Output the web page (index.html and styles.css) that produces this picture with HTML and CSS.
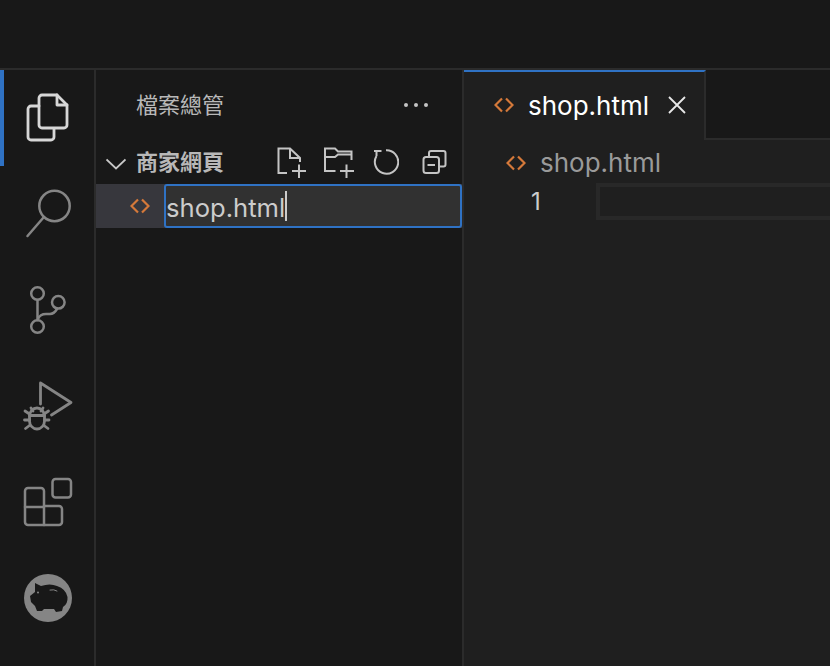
FILE: index.html
```html
<!DOCTYPE html>
<html lang="zh-Hant">
<head>
<meta charset="utf-8">
<title>shop.html</title>
<link rel="stylesheet" href="styles.css">
</head>
<body>
<div class="titlebar"></div>
<div class="workbench">
  <nav class="activity">
    <div class="act-item active">
      <svg class="act-icon on" viewBox="19 90 56 56"><path d="M39 106H31a3 3 0 0 0-3 3V137a3 3 0 0 0 3 3H51a3 3 0 0 0 3-3V129"/><path d="M42 95H57L67 105V125a3 3 0 0 1-3 3H42a3 3 0 0 1-3-3V98a3 3 0 0 1 3-3Z"/><path d="M57 95V105H67"/></svg>
    </div>
    <div class="act-item">
      <svg class="act-icon" viewBox="19 186 56 56"><circle cx="54.5" cy="206" r="15.2"/><path d="M43.5 217.5L27.5 236"/></svg>
    </div>
    <div class="act-item">
      <svg class="act-icon" viewBox="19 282 56 56"><circle cx="37.5" cy="293.5" r="6.3"/><circle cx="58.3" cy="302.3" r="6.3"/><circle cx="37.5" cy="326.5" r="6.3"/><path d="M37.5 300V320"/><path d="M38 319Q40 314 46 314H50Q54 314 57 309"/></svg>
    </div>
    <div class="act-item">
      <svg class="act-icon bug" viewBox="19 378 56 56"><path d="M40.500 404V383L71 402.500L51.500 415"/><path d="M29.500 421V416a7.500 8 0 0 1 15 0V421a7.500 8 0 0 1-15 0Z"/><path d="M29.500 415.500H44.500M31 408l2 3M43 408l-2 3M25 411l4.500 3M48.500 411l-4.500 3M24.500 420H29.500M44.500 420H49M25.500 428.500l4-3M48 428.500l-4-3"/></svg>
    </div>
    <div class="act-item">
      <svg class="act-icon" viewBox="19 474 56 56"><rect x="52.500" y="479" width="18.500" height="18.500" rx="3"/><path d="M28 488H41a3 3 0 0 1 3 3V506H59a3 3 0 0 1 3 3V522a3 3 0 0 1-3 3H28a3 3 0 0 1-3-3V491a3 3 0 0 1 3-3Z"/><path d="M25 507H44M44 506V525"/></svg>
    </div>
    <div class="act-item">
      <svg class="act-icon pig" viewBox="19 570 56 56"><circle class="pig-face" cx="48" cy="598" r="24"/><path class="pig-body" d="M35 583L41 586Q50 583 57 586Q66 589 67.500 597Q68 604 63 607L62 611L56 612L54 609L44 609L42 611L37 611L35 606L31 602L30 596L35 592Z"/><circle class="pig-face" cx="38" cy="592.500" r="1"/><path class="pig-line" d="M50 590Q54 589 57 591"/></svg>
    </div>
  </nav>

  <aside class="sidebar">
    <header class="side-head">
      <span class="side-title">檔案總管</span>
      <svg class="dots" viewBox="0 0 28 6"><circle cx="4" cy="3" r="2"/><circle cx="14" cy="3" r="2"/><circle cx="24" cy="3" r="2"/></svg>
    </header>
    <div class="section">
      <svg class="chevron" viewBox="0 0 20 12"><path d="M0.500 1.500L10 10.500L19.500 1.500"/></svg>
      <span class="section-title">商家網頁</span>
      <div class="tools">
        <svg class="tool tool-file" viewBox="277 147 30 32"><path d="M287 173H278.500V148.500H290L300 158V162M290 148.500V158H300M299 164.500V178M292 171H306"/></svg>
        <svg class="tool tool-folder" viewBox="323 147 32 32"><path d="M335.500 171H325V148.500H335L338 151.500H351.500V160M325 157H335L338 154.500H351.500M346.500 164.500V178M340 171H354"/></svg>
        <svg class="tool tool-refresh" viewBox="373 149 26 26"><path d="M376.500 156A11.700 11.700 0 1 0 386 150.300M374 151H381.500M376.500 151V156"/></svg>
        <svg class="tool tool-collapse" viewBox="421 149 26 26"><path d="M429 156V153a2 2 0 0 1 2-2H443.500a2 2 0 0 1 2 2V164.500a2 2 0 0 1-2 2H439.500"/><rect x="423.500" y="157" width="15.500" height="16" rx="2.500"/><path d="M427.500 165H435"/></svg>
      </div>
    </div>
    <div class="file-row">
      <svg class="html-icon" viewBox="0 0 20 16"><path d="M8 1.500L1.500 8L8 14.500M12 1.500L18.500 8L12 14.500"/></svg>
      <div class="rename"><span class="rename-text">shop.html</span><span class="caret"></span></div>
    </div>
  </aside>

  <main class="editor">
    <div class="tabs">
      <div class="tab">
        <svg class="html-icon" viewBox="0 0 20 16"><path d="M8 1.500L1.500 8L8 14.500M12 1.500L18.500 8L12 14.500"/></svg>
        <span class="tab-name">shop.html</span>
        <svg class="close" viewBox="0 0 18 18"><path d="M1 1L17 17M17 1L1 17"/></svg>
      </div>
      <div class="tabs-rest"></div>
    </div>
    <div class="crumbs">
      <svg class="html-icon" viewBox="0 0 20 16"><path d="M8 1.500L1.500 8L8 14.500M12 1.500L18.500 8L12 14.500"/></svg>
      <span class="crumb-name">shop.html</span>
    </div>
    <div class="code-line">
      <span class="line-no">1</span>
      <div class="line-current"></div>
    </div>
  </main>
</div>
</body>
</html>
```
FILE: styles.css
```css
* { box-sizing: border-box; }
html, body { height: 100%; }
body {
  margin: 0;
  overflow: hidden;
  display: flex;
  flex-direction: column;
  background: #181818;
  font-family: Inter, "Noto Sans CJK TC", sans-serif;
}
svg { display: block; flex: none; fill: none; }

.titlebar {
  height: 70px;
  flex: none;
  background: #181818;
  border-bottom: 2px solid #2b2b2b;
}
.workbench { flex: 1; display: flex; min-height: 0; }

.activity {
  width: 96px;
  flex: none;
  border-right: 2px solid #2b2b2b;
  background: #181818;
}
.act-item {
  height: 96px;
  display: flex;
  align-items: center;
  justify-content: center;
}
.act-item.active { box-shadow: inset 4px 0 0 #2f72c4; }
.act-icon {
  width: 56px;
  height: 56px;
  stroke: #858585;
  stroke-width: 2.5;
  stroke-linejoin: round;
  stroke-linecap: round;
}
.act-icon.on { stroke: #d7d7d7; stroke-width: 2.800; }
.act-icon.bug { stroke-width: 2.800; }
.pig { stroke: none; }
.pig-face { fill: #858585; }
.pig-body { fill: #181818; }
.pig-line { stroke: #858585; stroke-width: 1; fill: none; }

.sidebar {
  width: 368px;
  flex: none;
  background: #181818;
  border-right: 2px solid #2b2b2b;
}
.side-head {
  height: 70px;
  display: flex;
  align-items: center;
  justify-content: space-between;
  padding: 0 32px 0 40px;
}
.side-title {
  margin-bottom: 4px;
  font-family: "Noto Sans CJK TC", sans-serif;
  font-size: 22px;
  color: #b8b8b8;
}
.dots { width: 28px; height: 6px; fill: #c4c4c4; }

.section {
  height: 44px;
  display: flex;
  align-items: center;
  padding: 0 15px 0 10px;
}
.chevron {
  width: 20px;
  height: 12px;
  margin: 3px 10px 0 0;
  stroke: #c8c8c8;
  stroke-width: 1.800;
}
.section-title {
  margin-bottom: 4px;
  font-family: "Noto Sans CJK TC", sans-serif;
  font-weight: 700;
  font-size: 22px;
  color: #b8b8b8;
}
.tools { margin-left: auto; display: flex; align-items: center; }
.tool { stroke: #c4c4c4; stroke-width: 2; }
.tool-file { width: 30px; height: 32px; margin-top: 2px; }
.tool-folder { width: 32px; height: 32px; margin: 2px 0 0 16px; }
.tool-refresh { width: 26px; height: 26px; margin-left: 18px; }
.tool-collapse { width: 26px; height: 26px; margin-left: 22px; }

.file-row {
  height: 44px;
  display: flex;
  align-items: center;
  background: #37373d;
  padding-left: 34px;
}
.html-icon {
  width: 20px;
  height: 16px;
  stroke: #d5793a;
  stroke-width: 2.200;
}
.rename {
  flex: 1;
  height: 44px;
  margin-left: 14px;
  display: flex;
  align-items: center;
  padding: 0;
  background: #313131;
  border: 2px solid #2f72c4;
  border-radius: 3px;
}
.rename-text { margin-top: 2px; font-size: 25.600px; color: #cccccc; }
.caret { width: 2px; height: 30px; background: #cccccc; }

.editor {
  flex: 1;
  min-width: 0;
  background: #1f1f1f;
}
.tabs { height: 70px; display: flex; background: #181818; }
.tab {
  width: 242px;
  flex: none;
  display: flex;
  align-items: center;
  padding: 0 0 2px 30px;
  background: #1f1f1f;
  border-top: 2px solid #2f72c4;
  border-right: 2px solid #2b2b2b;
}
.tab-name { margin-left: 14px; font-size: 26px; color: #ffffff; }
.close {
  width: 18px;
  height: 18px;
  margin-left: 19px;
  stroke: #e8e8e8;
  stroke-width: 1.800;
}
.tabs-rest { flex: 1; border-bottom: 2px solid #2b2b2b; }

.crumbs {
  height: 43px;
  display: flex;
  align-items: center;
  padding: 2px 0 0 42px;
}
.crumb-name { margin-left: 14px; font-size: 26px; color: #9a9a9a; }

.code-line {
  height: 37px;
  display: flex;
  align-items: center;
}
.line-no {
  width: 132px;
  flex: none;
  padding-left: 67px;
  font-size: 24px;
  color: #cccccc;
}
.line-current {
  flex: 1;
  height: 37px;
  margin-right: -8px;
  border: 4px solid #282828;
}
```
